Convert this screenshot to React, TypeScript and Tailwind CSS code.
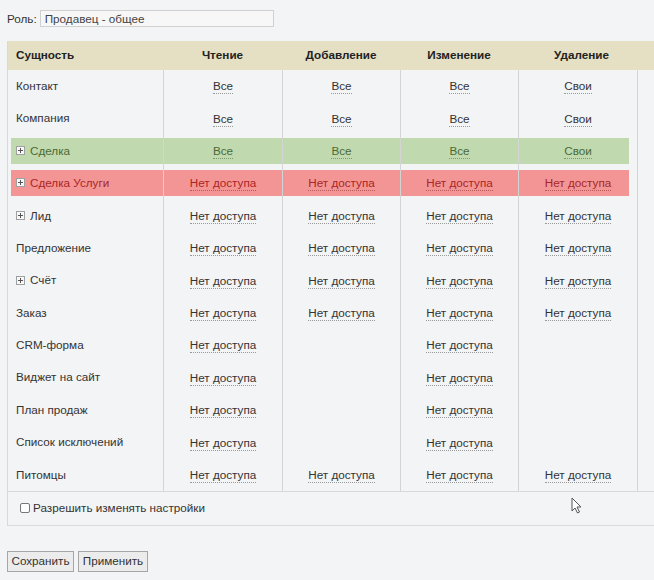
import React from "react";

type Cell = string | null;
type Row = {
  name: string;
  plus?: boolean;
  tone?: "green" | "red";
  cells: [Cell, Cell, Cell, Cell];
};

const NO = "Нет доступа";

const rows: Row[] = [
  { name: "Контакт", cells: ["Все", "Все", "Все", "Свои"] },
  { name: "Компания", cells: ["Все", "Все", "Все", "Свои"] },
  { name: "Сделка", plus: true, tone: "green", cells: ["Все", "Все", "Все", "Свои"] },
  { name: "Сделка Услуги", plus: true, tone: "red", cells: [NO, NO, NO, NO] },
  { name: "Лид", plus: true, cells: [NO, NO, NO, NO] },
  { name: "Предложение", cells: [NO, NO, NO, NO] },
  { name: "Счёт", plus: true, cells: [NO, NO, NO, NO] },
  { name: "Заказ", cells: [NO, NO, NO, NO] },
  { name: "CRM-форма", cells: [NO, null, NO, null] },
  { name: "Виджет на сайт", cells: [NO, null, NO, null] },
  { name: "План продаж", cells: [NO, null, NO, null] },
  { name: "Список исключений", cells: [NO, null, NO, null] },
  { name: "Питомцы", cells: [NO, NO, NO, NO] },
];

const colWidths = ["w-[119px]", "w-[118px]", "w-[118px]", "w-[119px]"];

function PlusBox() {
  return (
    <span className="mr-[5px] inline-flex h-[9px] w-[9px] shrink-0 items-center justify-center border border-[#a0a0a0] bg-[#f8f8f8]">
      <svg width="7" height="7" viewBox="0 0 7 7">
        <path d="M1 3.5h5M3.5 1v5" stroke="#555" strokeWidth="1" />
      </svg>
    </span>
  );
}

function Value({ text, tone }: { text: string; tone?: "green" | "red" }) {
  const color =
    tone === "green"
      ? "text-[#4a6a37] border-[#7d9a6c]"
      : tone === "red"
        ? "text-[#a82626] border-[#b85a5a]"
        : "text-[#333] border-[#999]";
  return (
    <span className={`mt-[2px] border-b border-dotted leading-[14px] ${color}`}>{text}</span>
  );
}

function TableRow({ row }: { row: Row }) {
  const band =
    row.tone === "green" ? "bg-[#c1d9ae]" : row.tone === "red" ? "bg-[#f49595]" : "";
  const nameColor =
    row.tone === "green" ? "text-[#4a6a37]" : row.tone === "red" ? "text-[#a82626]" : "text-[#333]";
  return (
    <div className="flex h-[32.4px]">
      <div className="flex w-[155px] items-center">
        <div className={`ml-[3px] flex h-[26px] flex-1 items-center pl-[5px] ${band} ${nameColor}`}>
          {row.plus && <PlusBox />}
          {row.name}
        </div>
      </div>
      {row.cells.map((c, i) => (
        <div key={i} className={`flex items-center border-l border-[#d4d4d4] ${colWidths[i]}`}>
          <div
            className={`flex h-[26px] flex-1 items-center justify-center ${band} ${i === 3 ? "mr-[8px] pl-[8px]" : ""}`}
          >
            {c && <Value text={c} tone={row.tone} />}
          </div>
        </div>
      ))}
      <div className="flex-1 border-l border-[#d4d4d4]" />
    </div>
  );
}

export default function App() {
  return (
    <div className="relative h-[580px] w-[654px] overflow-hidden bg-[#f3f4f6] pt-[10px] font-['Liberation_Sans',Arial,sans-serif] text-[11.7px] text-[#333]">
      <div className="flex items-center pl-[7px]">
        <span className="mr-[3px]">Роль:</span>
        <div className="flex h-[17px] w-[234px] items-center border border-[#d0d0d0] bg-[#f7f7f7] pl-[4px] text-[#444]">
          Продавец - общее
        </div>
      </div>

      <div className="ml-[7px] mt-[13px] border-l border-[#d9d9d9]">
        <div className="flex h-[29px] items-center bg-[#e5dfc3] font-bold text-[#222]">
          <div className="w-[155px] pl-[8px]">Сущность</div>
          <div className="w-[119px] text-center">Чтение</div>
          <div className="w-[118px] text-center">Добавление</div>
          <div className="w-[118px] text-center">Изменение</div>
          <div className="w-[119px] pl-[8px] text-center">Удаление</div>
          <div className="flex-1" />
        </div>
        <div className="border-b border-[#d9d9d9]">
          {rows.map((r) => (
            <TableRow key={r.name} row={r} />
          ))}
        </div>
        <div className="flex h-[34px] items-center border-b border-[#d9d9d9] pl-[12px]">
          <span className="mr-[3px] h-[10px] w-[10px] rounded-[2px] border border-[#777] bg-white" />
          <span>Разрешить изменять настройки</span>
        </div>
      </div>

      <div className="ml-[7px] mt-[25px] flex gap-[4px]">
        <button className="h-[21px] w-[67px] border border-[#a6a6a6] bg-[#ececec] text-[#333]">
          Сохранить
        </button>
        <button className="h-[21px] w-[70px] border border-[#a6a6a6] bg-[#ececec] text-[#333]">
          Применить
        </button>
      </div>

      <svg
        className="absolute left-[571px] top-[497px]"
        width="11"
        height="17"
        viewBox="0 0 11 17"
      >
        <path d="M1 1v13l3-3 2.5 5 2-1-2.5-5h4z" fill="white" stroke="#555" strokeWidth="1" />
      </svg>
    </div>
  );
}
